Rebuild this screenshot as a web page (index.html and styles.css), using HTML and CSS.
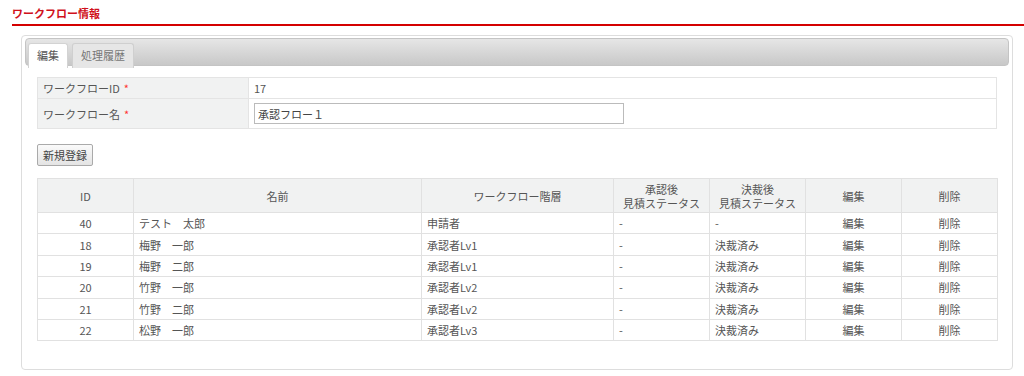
FILE: index.html
```html
<!DOCTYPE html>
<html lang="ja">
<head>
  <meta charset="UTF-8" />
  <title>ワークフロー情報</title>
  <link rel="stylesheet" href="styles.css">
</head>
<body>

  <h1 class="page-title">ワークフロー情報</h1>

  <div class="panel">
    <div class="tab-bar">
      <div class="tab active">編集</div>
      <div class="tab">処理履歴</div>
    </div>

    <div class="panel-body">
      <table class="form-table">
        <tr>
          <th>ワークフローID<span class="req">*</span></th>
          <td>17</td>
        </tr>
        <tr>
          <th>ワークフロー名<span class="req">*</span></th>
          <td><input type="text" class="text-input" value="承認フロー１"></td>
        </tr>
      </table>

      <button class="btn">新規登録</button>

      <table class="list-table">
        <colgroup>
          <col style="width:96px">
          <col style="width:288px">
          <col style="width:192px">
          <col style="width:96px">
          <col style="width:96px">
          <col style="width:96px">
          <col style="width:96px">
        </colgroup>
        <thead>
          <tr>
            <th>ID</th>
            <th>名前</th>
            <th>ワークフロー階層</th>
            <th>承認後<br>見積ステータス</th>
            <th>決裁後<br>見積ステータス</th>
            <th>編集</th>
            <th>削除</th>
          </tr>
        </thead>
        <tbody id="rows"></tbody>
      </table>
    </div>
  </div>

  <script>
    const rows = [
      [40, "テスト　太郎", "申請者", "-", "-"],
      [18, "梅野　一郎", "承認者Lv1", "-", "決裁済み"],
      [19, "梅野　二郎", "承認者Lv1", "-", "決裁済み"],
      [20, "竹野　一郎", "承認者Lv2", "-", "決裁済み"],
      [21, "竹野　二郎", "承認者Lv2", "-", "決裁済み"],
      [22, "松野　一郎", "承認者Lv3", "-", "決裁済み"]
    ];
    const tbody = document.getElementById("rows");
    rows.forEach(r => {
      const tr = document.createElement("tr");
      tr.innerHTML =
        `<td class="c">${r[0]}</td><td>${r[1]}</td><td>${r[2]}</td>` +
        `<td>${r[3]}</td><td>${r[4]}</td><td class="c">編集</td><td class="c">削除</td>`;
      tbody.appendChild(tr);
    });
  </script>
</body>
</html>
```

FILE: styles.css
```css
body {
  margin: 0;
  padding: 0 11px 0 12px;
  font-family: "Noto Sans CJK JP", "Noto Sans", sans-serif;
  font-size: 11px;
  color: #555;
  background: #fff;
}

.page-title {
  margin: 0 -11px 0 0;
  padding: 7px 0 4px;
  font-size: 11px;
  font-weight: bold;
  color: #d0111b;
  line-height: 13px;
  border-bottom: 2px solid #d40000;
}

.panel {
  margin: 9px 0 0 9px;
  border: 1px solid #ddd;
  border-radius: 4px;
  padding: 2px 3px 3px;
  height: 335px;
  box-sizing: border-box;
}

.tab-bar {
  display: flex;
  gap: 4px;
  height: 28px;
  padding: 4px 0 0 2px;
  box-sizing: border-box;
  border: 1px solid #c4c4c4;
  border-radius: 4px;
  background: linear-gradient(#e6e6e6, #c8c8c8);
}

.tab {
  padding: 0 8px;
  line-height: 23px;
  height: 24px;
  border: 1px solid #cfcfcf;
  border-bottom: none;
  border-radius: 3px 3px 0 0;
  background: #e6e6e6;
  color: #777;
}

.tab.active {
  padding: 0 8px;
  background: #fff;
  color: #555;
  border-color: #d3d3d3;
}

.panel-body {
  padding: 11px 12px 0 12px;
}

.form-table {
  width: 100%;
  border-collapse: collapse;
}

.form-table th,
.form-table td {
  border: 1px solid #e4e4e4;
  text-align: left;
  font-weight: normal;
  padding: 0 5px;
}

.form-table tr:first-child th,
.form-table tr:first-child td {
  height: 20px;
}

.form-table tr:last-child th,
.form-table tr:last-child td {
  height: 29px;
}

.form-table th {
  width: 200px;
  background: #f1f2f2;
}

.req {
  color: #f33;
  margin-left: 4px;
}

.text-input {
  width: 370px;
  height: 21px;
  box-sizing: border-box;
  border: 1px solid #bbb;
  padding: 0 3px;
  font: inherit;
  color: #444;
  display: block;
}

.btn {
  display: block;
  margin: 15px 0 12px;
  height: 22px;
  padding: 0 5px;
  font: inherit;
  color: #444;
  background: linear-gradient(#fafafa, #e4e4e4);
  border: 1px solid #aaa;
  border-radius: 2px;
}

.list-table {
  width: 100%;
  border-collapse: collapse;
  table-layout: fixed;
}

.list-table th,
.list-table td {
  border: 1px solid #e1e1e1;
  padding: 0 5px;
  height: 20.4px;
  line-height: 14px;
}

.list-table th {
  height: 33px;
  background: #f1f2f2;
  font-weight: normal;
  text-align: center;
}

.list-table td.c {
  text-align: center;
}
```
